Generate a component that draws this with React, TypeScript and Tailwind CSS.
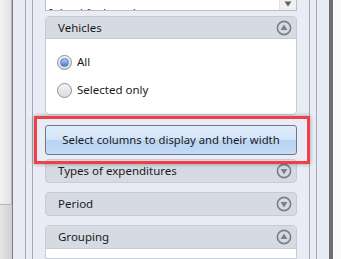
import React from 'react'

const font = { fontFamily: '"Noto Sans", "Open Sans", sans-serif' }

function ToggleIcon({ up }: { up?: boolean }) {
  return (
    <svg width="16" height="16" viewBox="0 0 16 16" className="shrink-0">
      <circle cx="8" cy="8" r="6.6" fill="none" stroke="#7b7f89" strokeWidth="1.6" />
      {up ? (
        <path d="M8 4.6 L11.4 10 H4.6 Z" fill="#7b7f89" />
      ) : (
        <path d="M8 11.4 L11.4 6 H4.6 Z" fill="#7b7f89" />
      )}
    </svg>
  )
}

function Radio({ checked, label }: { checked?: boolean; label: string }) {
  return (
    <div className="flex h-[16px] items-center gap-[5px]">
      <div className="flex h-[15px] w-[15px] items-center justify-center rounded-full border border-[#8a8e96] bg-gradient-to-b from-[#f4f4f4] to-[#dcdcdc]">
        {checked && (
          <div className="h-[9px] w-[9px] rounded-full border border-[#5a7fbf] bg-gradient-to-b from-[#b7cdf3] to-[#4b7bd6]" />
        )}
      </div>
      <span className="text-[11.5px] leading-[16px] text-[#1a1a1a]">{label}</span>
    </div>
  )
}

function SectionHeader({ title, up, rounded }: { title: string; up?: boolean; rounded?: string }) {
  return (
    <div className={`flex items-center justify-between border border-[#c6cad3] bg-[#d6dae3] pl-[12px] pr-[4px] ${rounded ?? 'h-[24px] rounded-[4px]'}`}>
      <span className="text-[11.5px] text-[#1a1a1a]">{title}</span>
      <ToggleIcon up={up} />
    </div>
  )
}

export default function App() {
  return (
    <div className="relative flex h-[259px] w-[341px] overflow-hidden bg-[#e9ecf4]" style={font}>
      {/* left window edge */}
      <div className="flex w-[12px] flex-col">
        <div className="h-[205px] border-b border-r border-[#b8b8b8] bg-gradient-to-r from-[#f2f2f2] to-[#e2e2e2]" />
        <div className="flex-1 bg-gradient-to-r from-[#e6e6e6] to-[#cfcfcf]" />
      </div>
      <div className="w-px bg-[#7c7c7c]" />
      <div className="w-[12px]" />
      <div className="w-px bg-[#a4a8b0]" />
      <div className="w-[6px]" />
      <div className="w-px bg-[#a4a8b0]" />

      {/* main column */}
      <div className="flex w-[276px] flex-col px-[12px]">
        <div className="flex h-[11px] border-b border-x border-[#b9bdc5] bg-white">
          <div className="flex flex-1 items-end overflow-hidden pl-[3px]">
            <span className="-mb-[10px] text-[11.3px] leading-[14px] text-[#1a1a1a]">
              Inland <span className="text-[#a01818]">f</span>uel purchase
            </span>
          </div>
          <div className="flex w-[17px] items-start justify-center border-l border-[#e2e2e2] bg-[#f0f0f0]">
            <svg width="8" height="6" viewBox="0 0 8 6" className="mt-[1px]">
              <path d="M0.5 0.5 H7.5 L4 5.5 Z" fill="#606060" />
            </svg>
          </div>
        </div>

        <div className="mt-[5px] flex h-[99px] flex-col rounded-[4px] border border-[#c6cad3] bg-white">
          <SectionHeader title="Vehicles" up rounded="h-[22px] rounded-t-[3px] border-0 border-b" />
          <div className="flex flex-col gap-[12px] pl-[11px] pt-[15px]">
            <Radio checked label="All" />
            <Radio label="Selected only" />
          </div>
        </div>

        <button className="mt-[10px] h-[30px] rounded-[3px] border border-[#707888] bg-[linear-gradient(to_bottom,#e2edfb_0%,#d3e4f9_48%,#b9d3f3_52%,#c4dbf6_100%)] text-[11.3px] text-[#1a1a1a]">
          Select columns to display and their width
        </button>

        <div className="mt-[4px]">
          <SectionHeader title="Types of expenditures" />
        </div>
        <div className="mt-[9px]">
          <SectionHeader title="Period" />
        </div>
        <div className="mt-[9px] flex flex-1 flex-col rounded-t-[4px] border border-[#c6cad3] bg-white">
          <SectionHeader title="Grouping" up rounded="h-[23px] rounded-t-[3px] border-0 border-b" />
        </div>
      </div>

      <div className="w-px bg-[#a4a8b0]" />
      <div className="w-[6px]" />
      <div className="w-px bg-[#a4a8b0]" />
      <div className="w-[12px]" />
      <div className="w-[4px] bg-[#6e6e6e]" />
      <div className="flex-1 bg-[#fafafa]" />

      {/* highlight annotation */}
      <div className="pointer-events-none absolute left-[34px] top-[116px] h-[48px] w-[276px] border-[3px] border-[#ee4048] shadow-[0_0_4px_rgba(0,0,0,0.35)]" />
    </div>
  )
}
